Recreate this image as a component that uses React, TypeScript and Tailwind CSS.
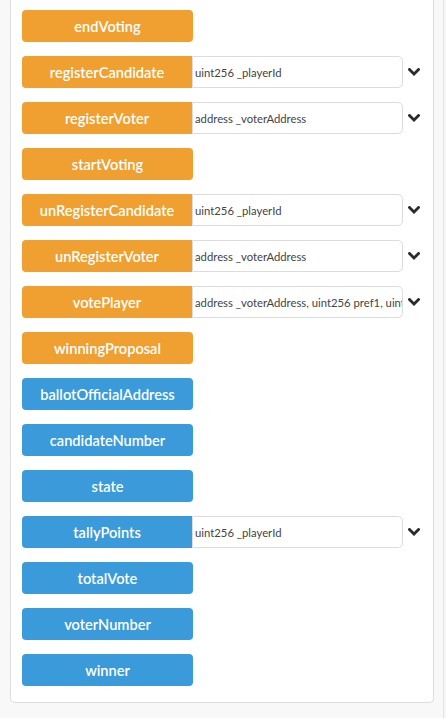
import React from 'react';

interface Fn {
  name: string;
  kind: 'tx' | 'call';
  inputs?: string;
}

const FUNCTIONS: Fn[] = [
  { name: 'endVoting', kind: 'tx' },
  { name: 'registerCandidate', kind: 'tx', inputs: 'uint256 _playerId' },
  { name: 'registerVoter', kind: 'tx', inputs: 'address _voterAddress' },
  { name: 'startVoting', kind: 'tx' },
  { name: 'unRegisterCandidate', kind: 'tx', inputs: 'uint256 _playerId' },
  { name: 'unRegisterVoter', kind: 'tx', inputs: 'address _voterAddress' },
  { name: 'votePlayer', kind: 'tx', inputs: 'address _voterAddress, uint256 pref1, uint256 pref2, uint256 pref3' },
  { name: 'winningProposal', kind: 'tx' },
  { name: 'ballotOfficialAddress', kind: 'call' },
  { name: 'candidateNumber', kind: 'call' },
  { name: 'state', kind: 'call' },
  { name: 'tallyPoints', kind: 'call', inputs: 'uint256 _playerId' },
  { name: 'totalVote', kind: 'call' },
  { name: 'voterNumber', kind: 'call' },
  { name: 'winner', kind: 'call' },
];

function Chevron() {
  return (
    <svg width="12" height="8" viewBox="0 0 12 8" className="ml-[5px] shrink-0">
      <polyline points="1.5,1.5 6,6 10.5,1.5" fill="none" stroke="#2b2b2b" strokeWidth="2.8" strokeLinecap="square" />
    </svg>
  );
}

function FnRow({ fn }: { fn: Fn }) {
  const color = fn.kind === 'tx' ? 'bg-[#f0a030]' : 'bg-[#3b9ad9]';
  if (!fn.inputs) {
    return (
      <div className="flex h-[32px]">
        <button className={`${color} w-[171px] h-[32px] pt-px rounded-[4px] text-white text-[14.6px] font-semibold`}>
          {fn.name}
        </button>
      </div>
    );
  }
  return (
    <div className="flex items-center h-[32px]">
      <button className={`${color} w-[170px] h-[32px] pt-px rounded-l-[4px] text-white text-[14.6px] font-semibold shrink-0`}>
        {fn.name}
      </button>
      <input
        readOnly
        placeholder={fn.inputs}
        className="w-[211px] h-[32px] border border-[#dcdcdc] rounded-r-[5px] pl-[2px] text-[11.3px] text-[#444] placeholder:text-[#444] outline-none bg-white"
      />
      <Chevron />
    </div>
  );
}

export default function App() {
  return (
    <div className="w-[446px] h-[718px] bg-[#f6f6f6] overflow-hidden" style={{ fontFamily: 'Lato, "Open Sans", sans-serif' }}>
      <div className="w-[444px] h-full border-r border-[#e4e4e4] bg-[#f8f8f8] pl-[10px]">
        <div className="w-[424px] bg-white border border-t-0 border-[#dcdcdc] rounded-b-[5px] pt-[10px] pb-[16px] pl-[11px] flex flex-col gap-[14px]">
          {FUNCTIONS.map((fn) => (
            <FnRow key={fn.name} fn={fn} />
          ))}
        </div>
      </div>
    </div>
  );
}
